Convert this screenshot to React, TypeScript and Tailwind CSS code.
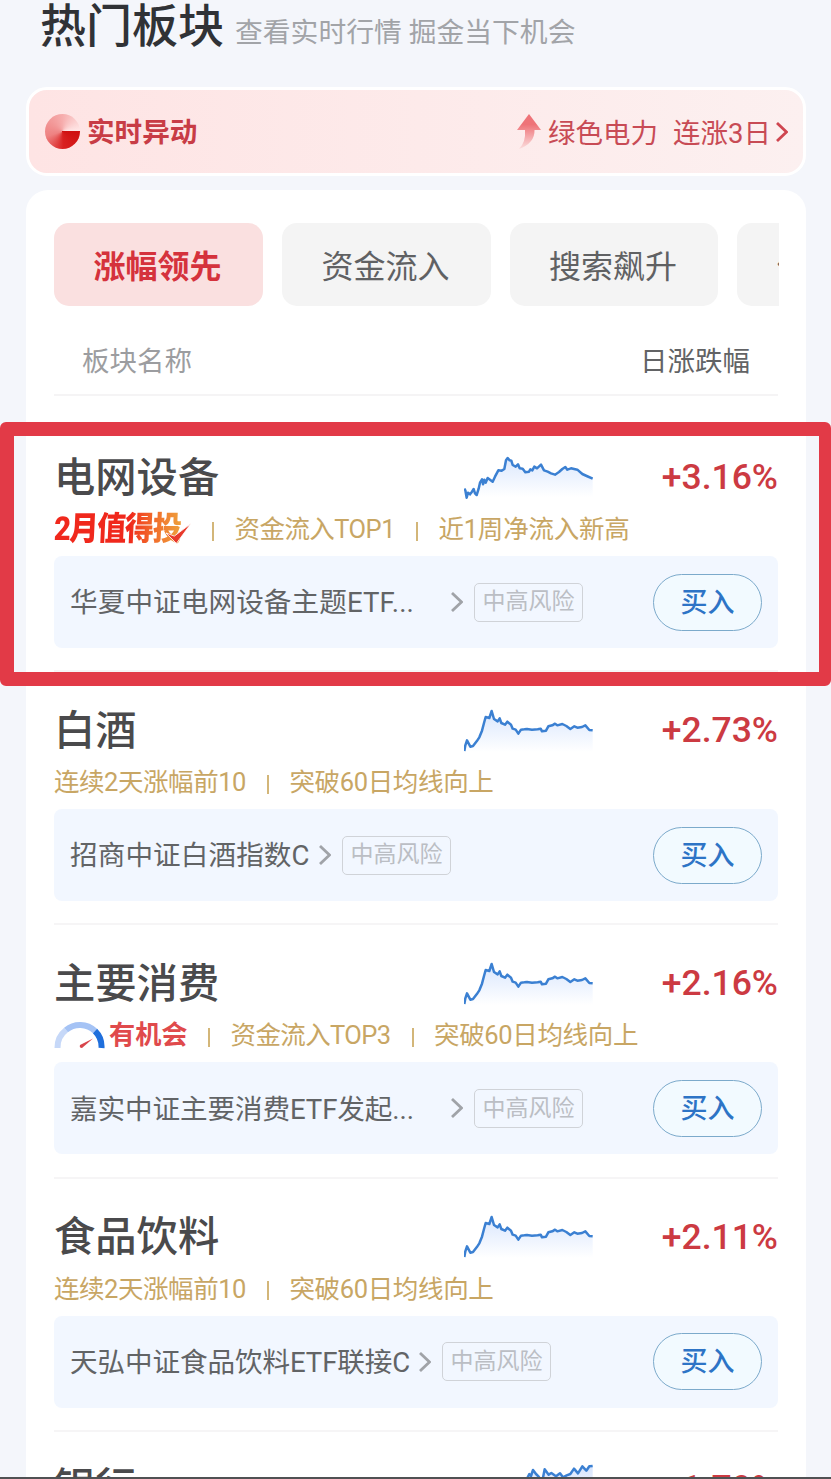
import type { ReactNode } from 'react';

const PEAK_LATE =
  'M43 130 L46 135 L50 157 L54 142 L60 147 L66 139 L71 131 L75 144 L80 149 L86 130 L90 112 L96 102 L99 117 L103 103 L107 112 L113 98 L120 103 L128 109 L135 94 L145 75 L155 76 L163 71 L168 45 L173 38 L179 45 L184 46 L188 59 L197 64 L204 57 L209 69 L218 70 L226 81 L237 79 L241 72 L247 75 L253 64 L261 69 L273 58 L282 75 L293 79 L303 84 L315 88 L327 80 L337 71 L346 65 L352 73 L363 69 L382 73 L397 86 L410 92 L428 100';
const PEAK_EARLY =
  'M43 152 L46 135 L51 120 L61 139 L69 137 L80 123 L88 111 L96 91 L102 68 L107 50 L118 53 L125 32 L132 56 L143 63 L149 54 L154 68 L165 73 L172 64 L183 73 L188 85 L197 88 L205 100 L213 88 L223 87 L231 86 L246 88 L263 87 L272 85 L276 93 L288 91 L295 78 L307 75 L315 70 L322 75 L337 71 L349 77 L361 86 L373 78 L382 82 L396 80 L406 75 L418 89 L428 90';
const RISING =
  'M43 140 L70 128 L96 134 L125 112 L160 120 L190 96 L215 104 L230 66 L238 50 L243 56 L249 38 L258 50 L266 58 L271 66 L278 66 L284 36 L296 52 L304 47 L318 57 L330 48 L339 60 L350 54 L361 50 L372 34 L384 48 L397 27 L409 40 L418 27 L428 26';

function Spark({ d, top, id }: { d: string; top: number; id: string }) {
  return (
    <svg className="mt-[3px] h-[54px] w-[130px] shrink-0" viewBox={`42 ${top} 390 162`} fill="none">
      <defs>
        <linearGradient id={id} x1="0" y1="30" x2="0" y2="155" gradientUnits="userSpaceOnUse">
          <stop offset="0" stopColor="#d9e6fd" />
          <stop offset="1" stopColor="#ffffff" />
        </linearGradient>
      </defs>
      <path d={`${d} L428 160 L43 160 Z`} fill={`url(#${id})`} />
      <path d={d} stroke="#3b80d2" strokeWidth="7.5" strokeLinejoin="round" />
    </svg>
  );
}

function Chevron({ className }: { className: string }) {
  return (
    <svg className={className} viewBox="0 0 12 20" fill="none" stroke="currentColor" strokeWidth="2.8">
      <path d="M1 1 L10.5 10 L1 19" />
    </svg>
  );
}

function Divider() {
  return <i className="mr-[20.500px] ml-[21px] mt-[4px] h-[19px] w-[2px] shrink-0 bg-[#d3b679]" />;
}

function WorthBadge() {
  return (
    <span className="relative flex h-[30px] w-[137px] shrink-0 items-center">
      <span className="origin-left -skew-x-3 scale-x-[1.04] scale-y-[1.18] bg-gradient-to-r from-[#f0281c] from-60% to-[#eda03c] bg-clip-text text-[28px] leading-[30px] font-black tracking-[-1.3px] whitespace-nowrap text-transparent">
        2月值得投
      </span>
      <svg className="absolute top-[8px] left-[112px] h-[23px] w-[26px]" viewBox="0 0 25 21">
        <path d="M0 10 L8 13 L24 1 L10 20 Z" fill="#e8392b" stroke="#fff" strokeWidth="0.8" />
      </svg>
    </span>
  );
}

function ChanceBadge() {
  return (
    <span className="flex w-[133px] shrink-0 items-center">
      <svg className="mr-[4px] h-[28px] w-[51px] shrink-0" viewBox="0 0 51 28" fill="none" strokeWidth="6">
        <path d="M3.5 27 A22 22 0 0 1 12 9" stroke="#c6d8f8" />
        <path d="M12 9 A22 22 0 0 1 41 10" stroke="#a5c3f5" />
        <path d="M41 10 A22 22 0 0 1 47.5 27" stroke="#1f6fdc" />
        <path d="M26 24 L39 17.500 L28 27 Q25 27 26 24 Z" fill="#d8454b" />
      </svg>
      <span className="text-[26.200px] leading-[28px] font-bold text-[#e04a4c]">有机会</span>
    </span>
  );
}

type Sector = {
  name: string;
  change: string;
  chart: string;
  top: number;
  badge?: ReactNode;
  tags: { text: string; tracking: string }[];
  fund: string;
  fundClass: string;
};

const streakTags = [
  { text: '连续2天涨幅前10', tracking: 'tracking-[-0.45px]' },
  { text: '突破60日均线向上', tracking: 'tracking-[-0.35px]' },
];

const sectors: Sector[] = [
  {
    name: '电网设备', change: '+3.16%', chart: PEAK_LATE, top: 20, badge: <WorthBadge />,
    tags: [
      { text: '资金流入TOP1', tracking: 'tracking-[-0.55px]' },
      { text: '近1周净流入新高', tracking: 'tracking-[-0.2px]' },
    ],
    fund: '华夏中证电网设备主题ETF...', fundClass: 'w-[381px] tracking-[0.1px]',
  },
  {
    name: '白酒', change: '+2.73%', chart: PEAK_EARLY, top: 14, tags: streakTags,
    fund: '招商中证白酒指数C', fundClass: 'w-[249px] tracking-[0.1px]',
  },
  {
    name: '主要消费', change: '+2.16%', chart: PEAK_EARLY, top: 14, badge: <ChanceBadge />,
    tags: [
      { text: '资金流入TOP3', tracking: 'tracking-[-0.6px]' },
      { text: '突破60日均线向上', tracking: 'tracking-[-0.35px]' },
    ],
    fund: '嘉实中证主要消费ETF发起...', fundClass: 'w-[381px] tracking-[-0.1px]',
  },
  {
    name: '食品饮料', change: '+2.11%', chart: PEAK_EARLY, top: 14, tags: streakTags,
    fund: '天弘中证食品饮料ETF联接C', fundClass: 'w-[349px] tracking-[-0.1px]',
  },
  { name: '银行', change: '+1.79%', chart: RISING, top: 14, tags: [], fund: '', fundClass: '' },
];

function SectorRow({ s, i }: { s: Sector; i: number }) {
  return (
    <article className="flex h-[253.200px] shrink-0 flex-col border-b-2 border-[#f6f5f6] pt-[33px] last:pt-[31px]">
      <div className="flex h-[50px] items-center">
        <h2 className="w-[410px] pt-px text-[41.300px] leading-[50px] font-medium whitespace-nowrap text-[#4a4a4c]">{s.name}</h2>
        <Spark d={s.chart} top={s.top} id={`area${i}`} />
        <b className="flex-1 text-right font-[Roboto] text-[35.500px] leading-[50px] font-medium whitespace-nowrap text-[#cc3a42]">
          {s.change}
        </b>
      </div>
      {s.tags.length > 0 && (
        <>
          <div className="mt-[12px] flex h-[30px] items-center text-[25.500px] leading-[30px] whitespace-nowrap text-[#c8a664]">
            {s.badge}
            {s.tags.map((t, k) => (
              <span key={t.text} className={`flex items-center ${t.tracking}`}>
                {(k > 0 || s.badge) && <Divider />}
                {t.text}
              </span>
            ))}
          </div>
          <div className="mt-[12px] flex h-[92px] items-center rounded-[8px] bg-[#f2f7ff] pr-[16px] pl-[16px]">
            <span className={`shrink-0 pt-[2px] text-[27.600px] whitespace-nowrap text-[#626466] ${s.fundClass}`}>{s.fund}</span>
            <Chevron className="h-[20px] w-[12px] shrink-0 text-[#a0a3a8]" />
            <span className="ml-[11px] flex h-[39px] w-[109px] items-center justify-center rounded-[5px] border-[1.500px] border-[#d0d3d8] pt-px text-[23px] text-[#bbbec4]">
              中高风险
            </span>
            <button className="ml-auto h-[57px] w-[109px] rounded-full border border-[#7caacb] bg-[#f2faff] pt-[2px] text-[27px] font-medium text-[#2d74c6]">
              买入
            </button>
          </div>
        </>
      )}
    </article>
  );
}

export default function App() {
  return (
    <main className="relative flex h-[1479px] w-[831px] flex-col overflow-hidden bg-[#f4f6fb] pl-[26px] font-[Roboto,'Noto_Sans_CJK_SC',sans-serif]">
      <header className="flex h-[87px] shrink-0 items-start pt-px pl-[14px] whitespace-nowrap">
        <h1 className="w-[195px] text-[46px] leading-[50px] font-medium text-[#303236]">热门板块</h1>
        <p className="pt-[8px] text-[27.800px] leading-[48px] text-[#a2a4a8]">查看实时行情 掘金当下机会</p>
      </header>
      <section className="flex h-[89px] w-[780px] shrink-0 items-center rounded-[21px] border-[3px] border-white bg-gradient-to-r from-[#fee4e4] to-[#fcf0f0] pr-[15px] pl-[16px] whitespace-nowrap">
        <i className="size-[35px] rounded-full bg-[conic-gradient(from_90deg,#cf1010,#d92020_24%,#ee8181_45%,#f6adad_75%,#ffe9e9)]" />
        <b className="ml-[7px] pt-[3px] text-[27.600px] font-bold text-[#c83c45]">实时异动</b>
        <svg className="ml-auto h-[36px] w-[24px]" viewBox="0 0 24 36">
          <defs>
            <linearGradient id="rise" x1="0" y1="0" x2="0" y2="1">
              <stop offset="0.300" stopColor="#ee7378" />
              <stop offset="1" stopColor="#fbdede" />
            </linearGradient>
          </defs>
          <path d="M12 0 L24 16 L17.500 16 Q18 29 2 35 Q9 28 8 16 L0 16 Z" fill="url(#rise)" />
        </svg>
        <span className="ml-[7px] pt-[4px] text-[27.500px] text-[#c84b55]">绿色电力</span>
        <span className="ml-[15px] pt-[4px] text-[27.500px] text-[#c84b55]">连涨3日</span>
        <Chevron className="ml-[5px] h-[20px] w-[12px] text-[#cf4650]" />
      </section>
      <section className="mt-[14px] flex h-[1400px] w-[780px] shrink-0 flex-col rounded-t-[22px] bg-white px-[28px] pt-[33px]">
        <nav className="flex h-[83px] w-[725px] shrink-0 gap-[19px] overflow-hidden text-[32px] whitespace-nowrap text-[#606163]">
          <button className="w-[209px] shrink-0 rounded-[15px] bg-[#fae0e0] pt-[5px] pr-[2px] font-bold text-[#d5323c]">涨幅领先</button>
          <button className="w-[209px] shrink-0 rounded-[15px] bg-[#f4f4f4] pt-[5px] pr-[2px]">资金流入</button>
          <button className="w-[208px] shrink-0 rounded-[15px] bg-[#f4f4f4] pt-[5px] pr-[2px]">搜索飙升</button>
          <button className="w-[209px] shrink-0 rounded-[15px] bg-[#f4f4f4] pt-[5px] pl-[40px] text-left">估值</button>
        </nav>
        <div className="flex h-[90px] shrink-0 items-center justify-between border-b-2 border-[#f5f4f5] px-[28px] text-[27.500px] whitespace-nowrap">
          <span className="pt-[23px] text-[#9c9da0]">板块名称</span>
          <span className="pt-[23px] text-[#626365]">日涨跌幅</span>
        </div>
        <div className="mt-[23px] flex flex-col">
          {sectors.map((s, i) => (
            <SectorRow key={s.name} s={s} i={i} />
          ))}
        </div>
      </section>
      <div className="absolute top-[422px] left-0 h-[264px] w-[831px] rounded-[6px] border-x-[12px] border-y-[14px] border-l-[14px] border-[#e23a47]" />
      <div className="absolute bottom-0 left-0 h-[2px] w-full bg-[#505153]" />
    </main>
  );
}
